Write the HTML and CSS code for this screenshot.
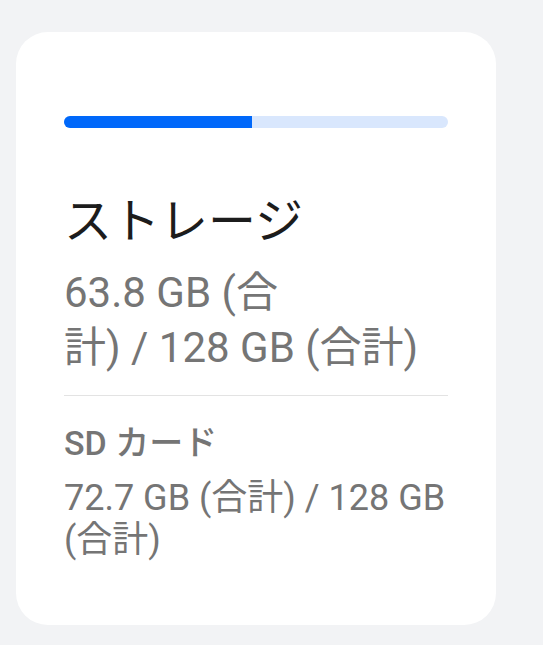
FILE: index.html
```html
<!DOCTYPE html>
<html lang="ja">
<head>
  <meta charset="UTF-8">
  <title>ストレージ</title>
  <meta name="viewport" content="width=device-width, initial-scale=1.0">
  <link rel="stylesheet" href="styles.css">
</head>
<body>
  <div class="card">
    <div class="usage-bar">
      <div class="usage-fill" style="width: 49%;"></div>
    </div>

    <div class="storage-main">
      <h1 class="storage-title">ストレージ</h1>
      <p class="storage-detail">63.8 GB (合<br>計) / 128 GB (合計)</p>
    </div>

    <hr class="divider">

    <div class="storage-sd">
      <h2 class="sd-title">SD カード</h2>
      <p class="sd-detail">72.7 GB (合計) / 128 GB (合計)</p>
    </div>
  </div>
</body>
</html>
```

FILE: styles.css
```css
body {
  margin: 0;
  padding: 32px 16px;
  background: #f2f3f5;
  font-family: Roboto, "Noto Sans CJK JP", sans-serif;
}

.card {
  width: 480px;
  box-sizing: border-box;
  background: #fff;
  border-radius: 32px;
  padding: 84px 48px 64px;
}

.usage-bar {
  height: 12px;
  background: #d9e7fd;
  border-radius: 6px;
  overflow: hidden;
}

.usage-fill {
  height: 100%;
  background: #0068fa;
}

.storage-main {
  margin-top: 66px;
}

.storage-title {
  margin: 0;
  font-size: 48px;
  font-weight: 400;
  line-height: 56px;
  color: #1c1c1c;
}

.storage-detail {
  margin: 15px 0 0;
  font-size: 42px;
  line-height: 55px;
  color: #757575;
}

.divider {
  margin: 20px 0 0;
  border: none;
  border-top: 1px solid #e3e3e3;
}

.storage-sd {
  margin-top: 27px;
}

.sd-title {
  margin: 0;
  font-size: 34px;
  font-weight: 500;
  line-height: 40px;
  color: #757575;
}

.sd-detail {
  margin: 14px 0 0;
  font-size: 36px;
  line-height: 42px;
  color: #757575;
}
```
